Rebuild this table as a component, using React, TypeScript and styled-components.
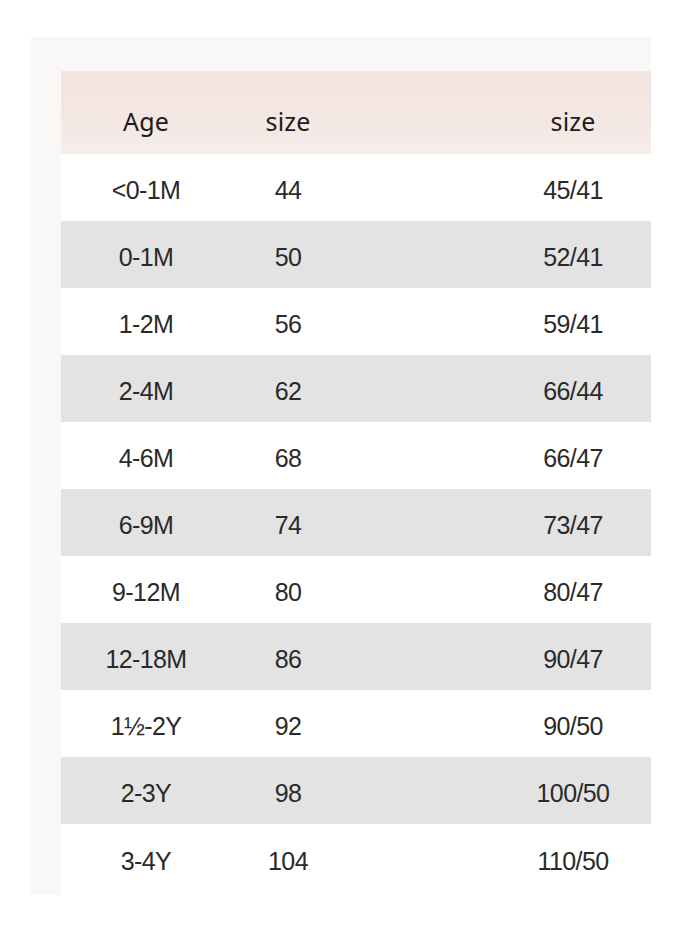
import React from 'react';
import styled, { createGlobalStyle } from 'styled-components';

const rows: [string, string, string][] = [
    ['<0-1M', '44', '45/41'],
    ['0-1M', '50', '52/41'],
    ['1-2M', '56', '59/41'],
    ['2-4M', '62', '66/44'],
    ['4-6M', '68', '66/47'],
    ['6-9M', '74', '73/47'],
    ['9-12M', '80', '80/47'],
    ['12-18M', '86', '90/47'],
    ['1½-2Y', '92', '90/50'],
    ['2-3Y', '98', '100/50'],
    ['3-4Y', '104', '110/50'],
];

const GlobalStyle = createGlobalStyle`
    html, body {
        margin: 0;
        padding: 0;
        background: #ffffff;
    }
`;

export default function App (): JSX.Element {
    return (
        <>
            <GlobalStyle />
            <Page>
                <Panel>
                    <Table>
                        <HeaderRow>
                            <HeadCell>Age</HeadCell>
                            <HeadCell>size</HeadCell>
                            <HeadCell />
                            <HeadCell>size</HeadCell>
                        </HeaderRow>
                        {rows.map(([age, size, fit], i) => (
                            <Row key={age} $striped={i % 2 === 1} $last={i === rows.length - 1}>
                                <Cell>{age}</Cell>
                                <Cell>{size}</Cell>
                                <Cell />
                                <Cell>{fit}</Cell>
                            </Row>
                        ))}
                    </Table>
                </Panel>
            </Page>
        </>
    );
}

const Page = styled.div`
    width: 682px;
    height: 934px;
    padding: 37px 31px 0 31px;
    box-sizing: border-box;
    background: #ffffff;
`;

const Panel = styled.div`
    background: #f9f8f7;
    padding: 34px 0 0 30px;
`;

const Table = styled.div`
    display: flex;
    flex-direction: column;
`;

const columns = '170px 114px 150px 156px';

const HeaderRow = styled.div`
    display: grid;
    grid-template-columns: ${columns};
    align-items: center;
    height: 83px;
    padding-top: 16px;
    box-sizing: border-box;
    background: linear-gradient(180deg, #f3e5e0 0%, #f4e8e4 70%, #f6eeeb 100%);
`;

const HeadCell = styled.div`
    text-align: center;
    font-family: "Noto Sans", "Open Sans", sans-serif;
    font-size: 25px;
    color: #1c1c1c;
    letter-spacing: 0.2px;
`;

const Row = styled.div<{ $striped: boolean; $last: boolean; }>`
    display: grid;
    grid-template-columns: ${columns};
    align-items: center;
    height: ${(p) => (p.$last ? '71px' : '67px')};
    padding-top: ${(p) => (p.$last ? '4px' : '6px')};
    box-sizing: border-box;
    background: ${(p) => (p.$striped ? '#e3e3e3' : '#ffffff')};
`;

const Cell = styled.div`
    text-align: center;
    font-family: "Liberation Sans", Arial, sans-serif;
    font-size: 25px;
    color: #2a2a2a;
    letter-spacing: -0.6px;
`;
